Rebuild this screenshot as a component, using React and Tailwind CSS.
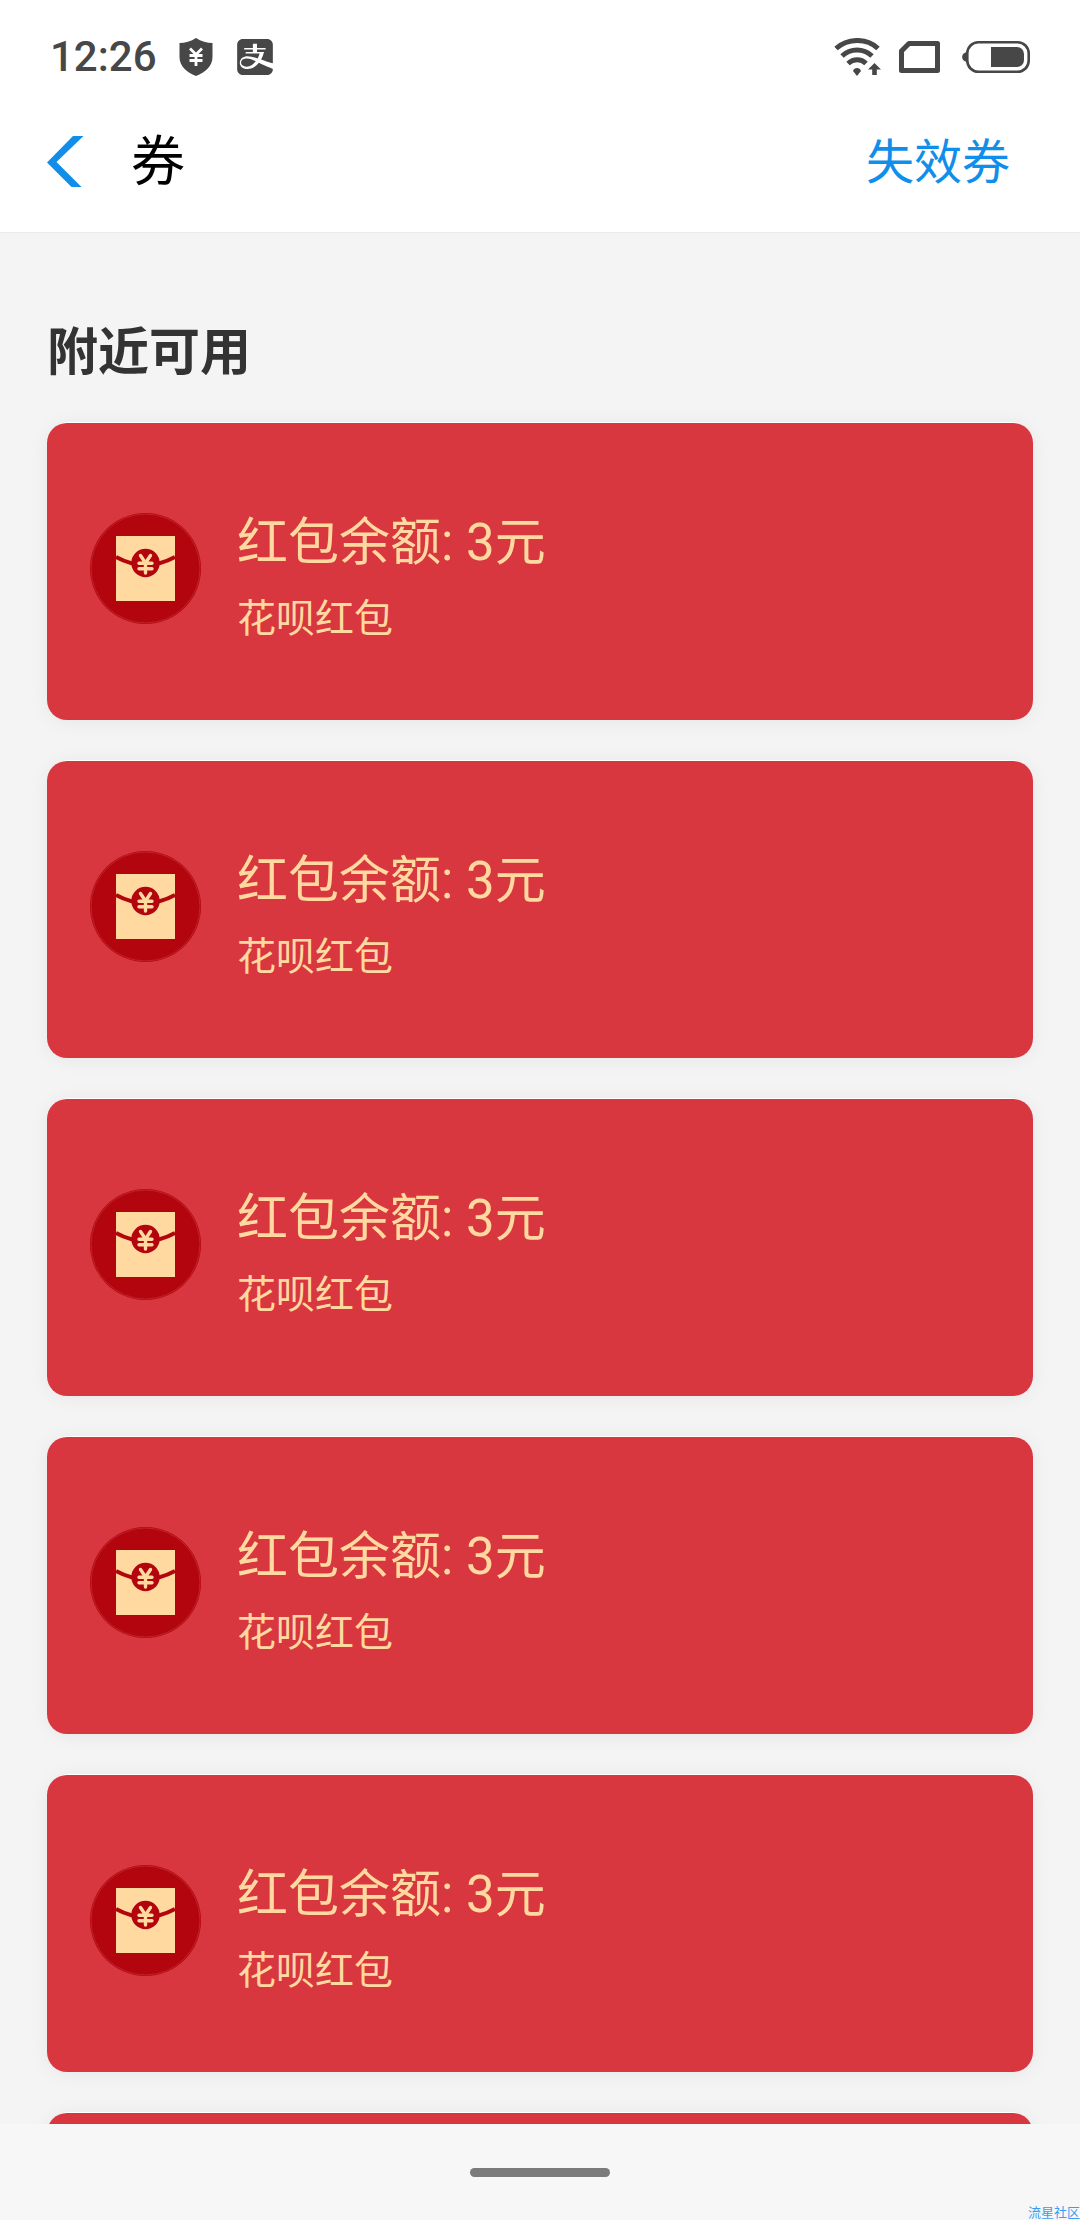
import React from "react";
import { SiAlipay } from "react-icons/si";

const coupons = [1, 2, 3, 4, 5, 6].map((id) => ({
  id,
  title: "红包余额: 3元",
  source: "花呗红包",
}));

function ShieldIcon() {
  return (
    <svg width="34" height="38" viewBox="0 0 34 38" aria-hidden="true">
      <path
        d="M17 0C12 3.500 6 5 .5 5v14c0 9 7 15.500 16.500 19C26.500 34.500 33.500 28 33.500 19V5C28 5 22 3.500 17 0Z"
        fill="currentColor"
      />
      <path
        d="M11 10.500l6 6 6-6M17 16v12M10.500 17.500h13M10.500 22.500h13"
        fill="none"
        stroke="#fff"
        strokeWidth="2.800"
      />
    </svg>
  );
}

function WifiIcon() {
  return (
    <svg width="47" height="38" viewBox="0 0 47 38" aria-hidden="true">
      <g fill="none" stroke="currentColor" strokeWidth="5">
        <path d="M2 10.500C14-.2 33-.2 44 10.500" />
        <path d="M8 18c8.500-8 21.500-8 30 0" />
        <path d="M14 25.500c5.500-5 13-5 18 0" />
      </g>
      <path d="M19 33c1-4 7-4 8 0l-4 5Z" fill="currentColor" />
      <path d="M40.500 25l6.500 6.500h-4.200V37h-4.600v-5.500H34Z" fill="currentColor" />
    </svg>
  );
}

function SimIcon() {
  return (
    <svg width="41" height="32" viewBox="0 0 41 32" aria-hidden="true">
      <path
        d="M10 2.500h28.500v27H2.500V10Z"
        fill="none"
        stroke="currentColor"
        strokeWidth="5"
        strokeLinejoin="round"
      />
    </svg>
  );
}

function BatteryIcon() {
  return (
    <svg width="68" height="32" viewBox="0 0 68 32" aria-hidden="true">
      <path d="M5 11C-1.500 12-1.500 20 5 21Z" fill="currentColor" />
      <rect x="5.300" y="1.300" width="61.400" height="29.400" rx="11" fill="none" stroke="currentColor" strokeWidth="2.600" />
      <path d="M29 6h26a7 7 0 0 1 7 7v6a7 7 0 0 1-7 7H29Z" fill="currentColor" />
    </svg>
  );
}

function EnvelopeIcon() {
  return (
    <svg className="size-[111px] shrink-0" viewBox="0 0 111 111" aria-hidden="true">
      <circle cx="55.500" cy="55.500" r="55.500" fill="#b3050d" />
      <circle cx="55.500" cy="55.500" r="54.500" fill="none" stroke="#c9444a" strokeWidth=".5" />
      <path d="M26 23h59v65H26Z" fill="#ffd99f" />
      <path d="M26 44q29.500 16 59 0" fill="none" stroke="#b3050d" strokeWidth="4" />
      <circle cx="55.500" cy="50" r="14.200" fill="#b3050d" />
      <path
        d="M50.500 42.500l5 7.500 5-7.500M55.500 50v10M49 50.300h13M49 55.800h13"
        fill="none"
        stroke="#ffd99f"
        strokeWidth="3.400"
        strokeLinecap="round"
      />
    </svg>
  );
}

function StatusBar() {
  return (
    <div className="flex h-[90px] items-center justify-between pt-6 pr-[50px] pl-[50px] text-[#474747]">
      <div className="flex items-center">
        <span className="text-[42px] leading-none font-medium">12:26</span>
        <div className="ml-[22px] flex items-center gap-6">
          <ShieldIcon />
          <SiAlipay size={36} />
        </div>
      </div>
      <div className="flex items-center">
        <WifiIcon />
        <div className="ml-[18px] flex items-center gap-[22px]">
          <SimIcon />
          <BatteryIcon />
        </div>
      </div>
    </div>
  );
}

function CouponCard({ title, source }) {
  return (
    <li className="rounded-[22px] bg-white pt-px shadow-[0_2px_20px_rgba(0,0,0,0.06)]">
      <div className="flex h-[297px] items-center gap-9 rounded-[20px] bg-[#d83740] px-[43px] pb-[6px] text-[#ffd99f]">
        <EnvelopeIcon />
        <div className="pt-5">
          <h2 className="text-[51px] leading-[80px]">{title}</h2>
          <p className="text-[39px] leading-[72px]">{source}</p>
        </div>
      </div>
    </li>
  );
}

function App() {
  return (
    <div className="relative flex h-screen flex-col overflow-hidden bg-[#f4f4f4] font-[Roboto,'Noto_Sans_CJK_SC',sans-serif]">
      <header className="border-b border-[#ebebeb] bg-white">
        <StatusBar />
        <div className="flex h-[142px] items-center pr-[70px] pl-[47px]">
          <button type="button" aria-label="返回" className="text-[#108ee9]">
            <svg width="37" height="51" viewBox="0 0 37 51" aria-hidden="true">
              <path d="M26 0h10.500L9.500 26l25 25h-10L0 26.500Z" fill="currentColor" />
            </svg>
          </button>
          <h1 className="ml-[47px] pt-1 text-[54px] leading-none">券</h1>
          <a href="#expired" className="ml-auto pt-1 text-[48px] leading-none text-[#108ee9]">
            失效券
          </a>
        </div>
      </header>

      <main className="min-h-0 flex-1 overflow-y-auto px-[47px] pt-20 [scrollbar-width:none]">
        <h2 className="text-[51px] leading-[80px] font-bold text-[#333]">附近可用</h2>
        <ul className="mt-[29px] flex flex-col gap-10">
          {coupons.map((coupon) => (
            <CouponCard key={coupon.id} title={coupon.title} source={coupon.source} />
          ))}
        </ul>
      </main>

      <footer className="flex h-24 shrink-0 items-center justify-center bg-[#f7f7f7]">
        <div className="h-[9px] w-[140px] rounded-full bg-[#7b7b7b]" />
      </footer>
      <span className="absolute right-0 bottom-0 text-[13px] leading-[14px] text-[#3b9cf0]">流星社区</span>
    </div>
  );
}

export default App;
